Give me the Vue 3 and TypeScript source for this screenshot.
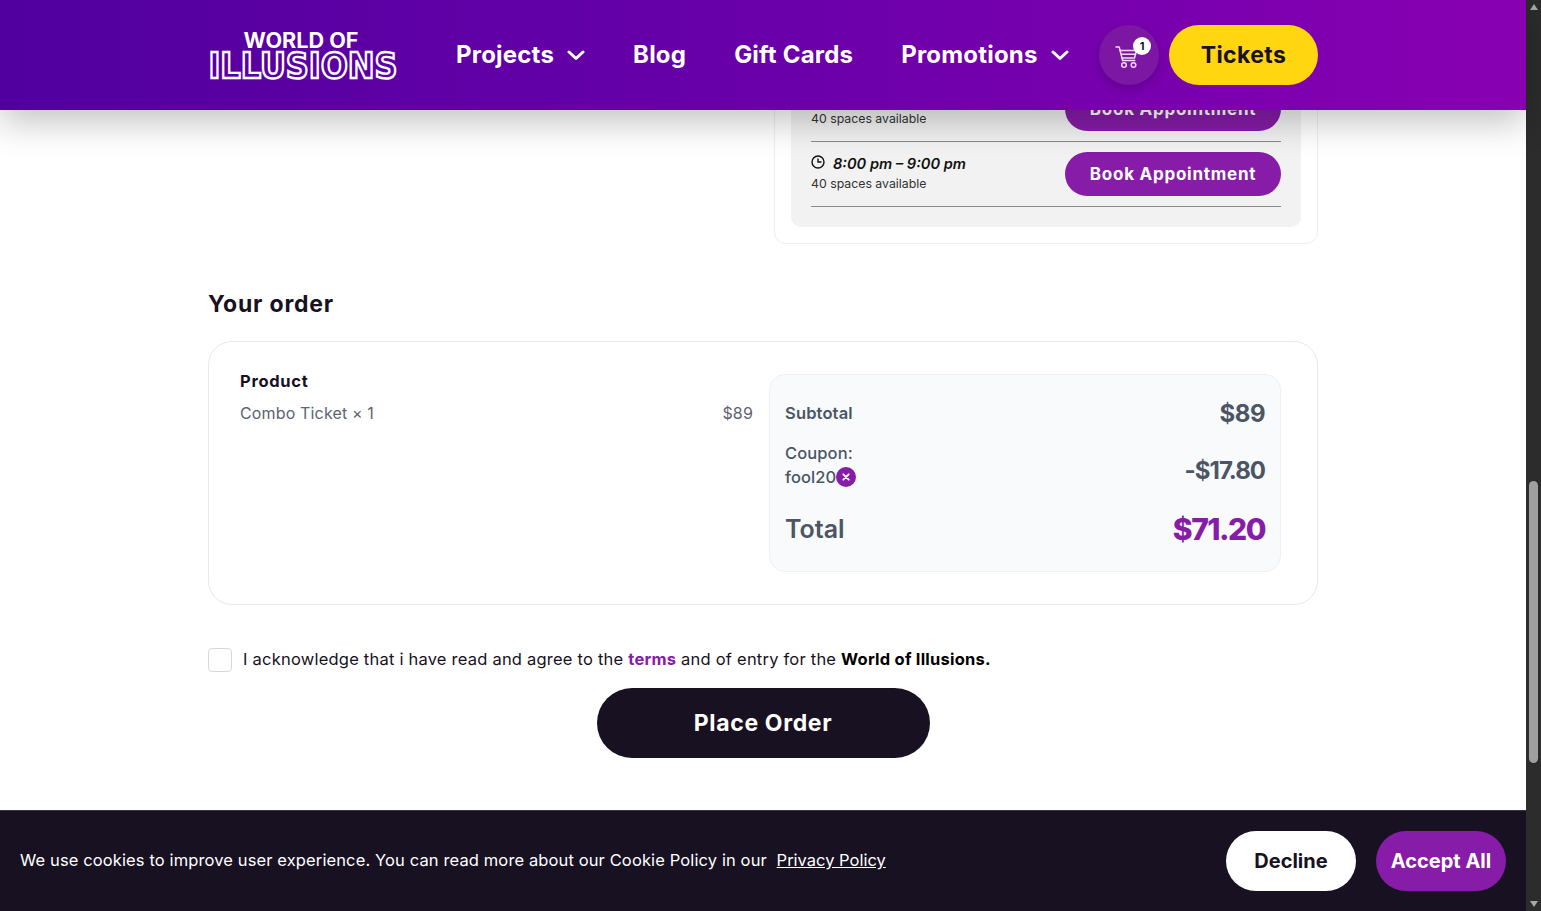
<template>
  <div class="window">
    <div class="page">
      <header class="site-header">
        <div class="header-inner">
          <div class="logo" role="img" aria-label="World of Illusions">
            <svg width="190" height="20" viewBox="0 0 190 20">
              <text class="logo-top" x="93" y="18" text-anchor="middle" textLength="115" lengthAdjust="spacingAndGlyphs">WORLD OF</text>
            </svg>
            <svg width="190" height="32" viewBox="0 0 190 32">
              <text class="logo-main" x="0.500" y="27.500" textLength="189" lengthAdjust="spacingAndGlyphs">ILLUSIONS</text>
            </svg>
          </div>
          <nav class="nav">
            <a v-for="item in navItems" :key="item.label" class="nav-link">
              {{ item.label }}
              <svg v-if="item.hasMenu" class="chevron" width="18" height="11" viewBox="0 0 18 11">
                <path d="M2 2l7 6.500L16 2" fill="none" stroke="#fff" stroke-width="3" stroke-linecap="round" stroke-linejoin="round" />
              </svg>
            </a>
          </nav>
          <button class="cart">
            <svg width="26" height="26" viewBox="0 0 26 26" fill="none" stroke="#f6d9ff" stroke-width="1.500" stroke-linecap="round" stroke-linejoin="round">
              <path d="M2 3h3.200l3.400 13.500h12.200" />
              <path d="M6 6.500h16.500l-2 7.500H8" />
              <path d="M7.500 10.200h14" />
              <circle cx="10" cy="21" r="2.300" />
              <circle cx="19.500" cy="21" r="2.300" />
            </svg>
            <span class="cart-badge">1</span>
          </button>
          <button class="tickets">Tickets</button>
        </div>
      </header>

      <main class="content">
        <section class="booking-card">
          <div class="slots">
            <div v-for="slot in slots" :key="slot" class="slot">
              <div class="slot-info">
                <div class="slot-time">
                  <svg width="14" height="14" viewBox="0 0 14 14" fill="none" stroke="#111" stroke-width="1.400">
                    <circle cx="7" cy="7" r="6" />
                    <path d="M7 3.500V7h3.500" />
                  </svg>
                  <em>{{ slot }}</em>
                </div>
                <div class="slot-spaces">40 spaces available</div>
              </div>
              <button class="book">Book Appointment</button>
            </div>
          </div>
        </section>

        <h2 class="order-title">Your order</h2>
        <section class="order-card">
          <div class="product">
            <div class="product-head">Product</div>
            <div class="product-row">
              <span>Combo Ticket × 1</span>
              <span>$89</span>
            </div>
          </div>
          <div class="summary">
            <div class="summary-row subtotal-row">
              <span class="summary-label">Subtotal</span>
              <span class="summary-value">$89</span>
            </div>
            <div class="summary-row coupon-row">
              <div class="summary-label">
                <div>Coupon:</div>
                <div class="coupon-code">
                  fool20
                  <svg width="20" height="20" viewBox="0 0 20 20">
                    <circle cx="10" cy="10" r="10" fill="#861ca8" />
                    <path d="M7.300 7.300l5.400 5.400M12.700 7.300l-5.400 5.400" stroke="#fff" stroke-width="1.800" stroke-linecap="round" />
                  </svg>
                </div>
              </div>
              <span class="summary-value coupon-value">-$17.80</span>
            </div>
            <div class="summary-row total-row">
              <span class="total-label">Total</span>
              <span class="total-value">$71.20</span>
            </div>
          </div>
        </section>

        <label class="terms">
          <span class="checkbox"></span>
          <span class="terms-text">I acknowledge that i have read and agree to the <a class="terms-link">terms</a> and of entry for the <strong>World of Illusions.</strong></span>
        </label>
        <button class="place-order">Place Order</button>
      </main>

      <footer class="cookie-bar">
        <p class="cookie-text">We use cookies to improve user experience. You can read more about our Cookie Policy in our <a class="cookie-link">Privacy Policy</a></p>
        <div class="cookie-actions">
          <button class="decline">Decline</button>
          <button class="accept">Accept All</button>
        </div>
      </footer>
    </div>

    <div class="scrollbar">
      <span class="arrow arrow-up"></span>
      <div class="track"><div class="thumb"></div></div>
      <span class="arrow arrow-down"></span>
    </div>
  </div>
</template>

<script setup lang="ts">
interface NavItem {
  label: string
  hasMenu: boolean
}

const navItems: NavItem[] = [
  { label: 'Projects', hasMenu: true },
  { label: 'Blog', hasMenu: false },
  { label: 'Gift Cards', hasMenu: false },
  { label: 'Promotions', hasMenu: true },
]

const slots: string[] = ['7:00 pm – 8:00 pm', '8:00 pm – 9:00 pm']
</script>

<style>
html,
body {
  margin: 0;
  overflow: hidden;
}
</style>

<style scoped>
.window {
  display: flex;
  height: 100vh;
  overflow: hidden;
  font-family: Inter, "Liberation Sans", sans-serif;
  color: #181122;
}

button {
  border: none;
  font-family: inherit;
  cursor: pointer;
}

.page {
  position: relative;
  flex: 1;
  min-width: 0;
  display: flex;
  flex-direction: column;
  background: #fff;
}

.site-header {
  position: absolute;
  top: 0;
  left: 0;
  right: 0;
  z-index: 5;
  height: 110px;
  background: linear-gradient(90deg, #51009f 0%, #6600a8 45%, #8800b2 100%);
  box-shadow: 0 12px 34px rgba(0, 0, 0, 0.24);
}

.header-inner {
  width: 1110px;
  height: 100%;
  margin: 0 auto;
  display: flex;
  align-items: center;
}

.logo {
  flex: none;
  display: flex;
  flex-direction: column;
  margin-top: 1px;
}

.logo svg {
  display: block;
  overflow: visible;
}

.logo-top {
  font-family: Inter, sans-serif;
  font-size: 21px;
  font-weight: 700;
  fill: #fff;
}

.logo-main {
  font-family: "DejaVu Sans", sans-serif;
  font-size: 35px;
  font-weight: 700;
  fill: none;
  stroke: #fff;
  stroke-width: 2.400px;
}

.nav {
  display: flex;
  gap: 48px;
  margin-top: -2px;
  margin-left: 58px;
}

.nav-link {
  display: flex;
  align-items: center;
  gap: 13px;
  color: #fff;
  font-size: 24px;
  font-weight: 700;
  letter-spacing: 0.2px;
  white-space: nowrap;
}

.chevron {
  margin-top: 2px;
}

.cart {
  position: relative;
  flex: none;
  width: 60px;
  height: 60px;
  margin-left: auto;
  padding: 4px 4px 0 0;
  border-radius: 50%;
  background: #7c17a3;
  box-shadow: 0 4px 10px rgba(50, 0, 90, 0.3);
  display: flex;
  align-items: center;
  justify-content: center;
}

.cart-badge {
  position: absolute;
  top: 12px;
  right: 8px;
  width: 18px;
  height: 18px;
  border-radius: 50%;
  background: #fff;
  color: #181122;
  font-size: 11px;
  font-weight: 700;
  line-height: 18px;
  text-align: center;
}

.tickets {
  flex: none;
  width: 149px;
  height: 60px;
  margin-left: 10px;
  padding-bottom: 2px;
  border-radius: 30px;
  background: #ffd60f;
  color: #181122;
  font-size: 23px;
  font-weight: 700;
  letter-spacing: 0.4px;
}

.content {
  flex: 1;
  min-height: 0;
  width: 1110px;
  margin: 0 auto;
  padding-top: 43px;
  display: flex;
  flex-direction: column;
}

.booking-card {
  align-self: flex-end;
  width: 544px;
  box-sizing: border-box;
  padding: 16px;
  border: 1px solid #eceef2;
  border-radius: 12px;
}

.slots {
  padding: 17px 20px 20px;
  border-radius: 10px;
  background: #f2f2f2;
}

.slot {
  height: 65px;
  box-sizing: border-box;
  border-bottom: 1px solid #8a8a8a;
  display: flex;
  align-items: center;
  justify-content: space-between;
}

.slot-info {
  margin-top: -2px;
}

.slot-time {
  display: flex;
  align-items: center;
  gap: 8px;
  height: 22px;
  font-size: 14.600px;
  font-weight: 600;
  color: #111;
}

.slot-time svg {
  margin-top: -4px;
}

.slot-spaces {
  font-size: 12.300px;
  line-height: 18px;
  color: #333;
}

.book {
  width: 216px;
  height: 44px;
  border-radius: 22px;
  background: #861ca8;
  color: #fff;
  font-size: 17px;
  font-weight: 700;
  letter-spacing: 0.75px;
}

.order-title {
  margin: 45px 0 22px;
  font-size: 23px;
  line-height: 30px;
  font-weight: 700;
  letter-spacing: 0.8px;
  color: #181122;
}

.order-card {
  height: 264px;
  box-sizing: border-box;
  padding: 32px 36px 32px 31px;
  border: 1px solid #e7e8ee;
  border-radius: 24px;
  display: flex;
  gap: 16px;
}

.product {
  flex: 1;
  min-width: 0;
}

.product-head {
  font-size: 16.500px;
  line-height: 14px;
  font-weight: 700;
  letter-spacing: 0.7px;
}

.product-row {
  margin-top: 18px;
  display: flex;
  justify-content: space-between;
  font-size: 16px;
  line-height: 14px;
  letter-spacing: 0.15px;
  color: #5c6470;
}

.summary {
  flex: none;
  width: 512px;
  box-sizing: border-box;
  padding: 0 15px;
  border: 1px solid #eef0f4;
  border-radius: 16px;
  background: #f8fafc;
  color: #4b5563;
}

.summary-row {
  display: flex;
  align-items: center;
  justify-content: space-between;
}

.subtotal-row {
  height: 38px;
  margin-top: 19px;
}

.summary-label {
  font-size: 16.500px;
  font-weight: 600;
  letter-spacing: 0.15px;
}

.coupon-row {
  height: 66px;
  line-height: 24px;
}

.coupon-row .summary-label {
  font-weight: 500;
  letter-spacing: 0.1px;
}

.coupon-code {
  display: flex;
  align-items: center;
}

.summary-value {
  font-size: 24px;
  font-weight: 700;
  letter-spacing: -0.5px;
}

.coupon-value {
  padding-top: 12px;
  letter-spacing: -1px;
}

.total-row {
  height: 62px;
}

.total-label {
  font-size: 25px;
  font-weight: 600;
}

.total-value {
  font-size: 30px;
  font-weight: 800;
  letter-spacing: -1.500px;
  color: #861ca8;
}

.terms {
  margin-top: 43px;
  display: flex;
  align-items: center;
  gap: 11px;
  font-size: 16.500px;
  letter-spacing: 0.22px;
  color: #181122;
}

.terms-text {
  margin-top: -2px;
}

.checkbox {
  flex: none;
  width: 24px;
  height: 24px;
  box-sizing: border-box;
  border: 1px solid #d8d8dc;
  border-radius: 4px;
  background: #fff;
}

.terms-link {
  color: #861ca8;
  font-weight: 700;
}

.terms strong {
  font-weight: 700;
  color: #000;
}

.place-order {
  align-self: center;
  width: 333px;
  height: 70px;
  margin-top: 16px;
  padding-bottom: 2px;
  border-radius: 35px;
  background: #181122;
  color: #fff;
  font-size: 23px;
  font-weight: 700;
  letter-spacing: 0.65px;
}

.cookie-bar {
  flex: none;
  height: 101px;
  box-sizing: border-box;
  padding: 0 20px;
  border-top: 1px solid #3a3540;
  background: #181122;
  display: flex;
  align-items: center;
  justify-content: space-between;
}

.cookie-text {
  margin: -2px 0 0;
  color: #fff;
  font-size: 16.500px;
  letter-spacing: 0.12px;
  white-space: pre-wrap;
}

.cookie-link {
  margin-left: 5px;
  color: #fff;
  letter-spacing: 0;
  text-decoration: underline;
}

.cookie-actions {
  display: flex;
  gap: 20px;
}

.decline,
.accept {
  width: 130px;
  height: 60px;
  border-radius: 30px;
  font-size: 20px;
  font-weight: 700;
}

.decline {
  background: #fff;
  color: #181122;
}

.accept {
  background: #861ca8;
  color: #fff;
}

.scrollbar {
  flex: none;
  width: 15px;
  background: #2c2c2c;
  display: flex;
  flex-direction: column;
  align-items: center;
}

.arrow {
  flex: none;
  width: 0;
  height: 0;
  margin: 4px 0;
  border-left: 4px solid transparent;
  border-right: 4px solid transparent;
}

.arrow-up {
  border-bottom: 6px solid #a8a8a8;
}

.arrow-down {
  border-top: 6px solid #a8a8a8;
}

.track {
  flex: 1;
  width: 100%;
  display: flex;
  justify-content: center;
}

.thumb {
  width: 9px;
  height: 282px;
  margin-top: 467px;
  border-radius: 5px;
  background: #9f9f9f;
}
</style>
